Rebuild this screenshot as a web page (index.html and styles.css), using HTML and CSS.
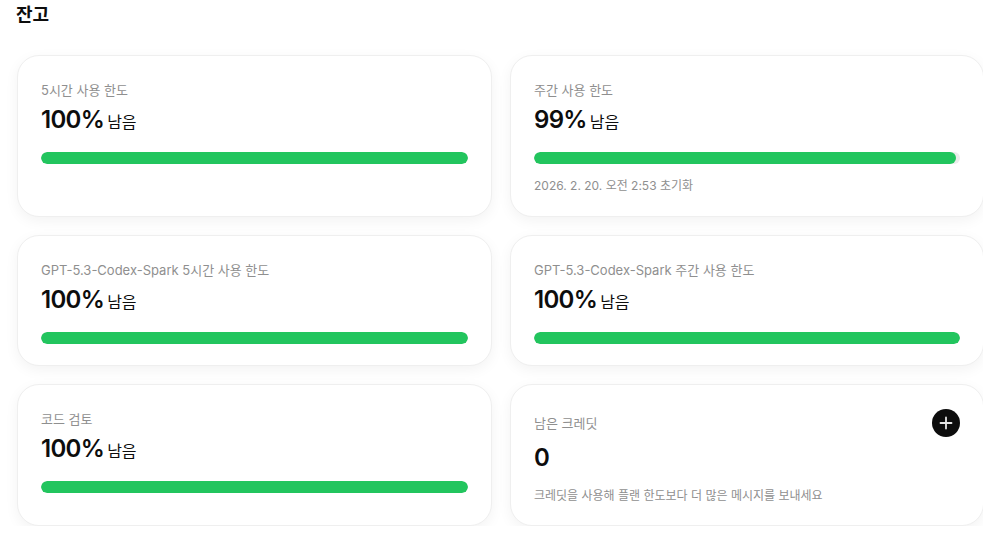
FILE: index.html
```html
<!DOCTYPE html>
<html lang="ko">
<head>
<meta charset="utf-8">
<title>잔고</title>
<link rel="stylesheet" href="styles.css">
</head>
<body>
<main class="page">
  <h2 class="title">잔고</h2>
  <div class="grid">
    <section class="card">
      <div class="label">5시간 사용 한도</div>
      <div class="value"><span class="num">100%</span><span class="unit">남음</span></div>
      <div class="track"><div class="fill" style="width:100%"></div></div>
    </section>
    <section class="card">
      <div class="label">주간 사용 한도</div>
      <div class="value"><span class="num">99%</span><span class="unit">남음</span></div>
      <div class="track"><div class="fill" style="width:99%"></div></div>
      <div class="note">2026. 2. 20. 오전 2:53 초기화</div>
    </section>
    <section class="card">
      <div class="label">GPT-5.3-Codex-Spark 5시간 사용 한도</div>
      <div class="value"><span class="num">100%</span><span class="unit">남음</span></div>
      <div class="track"><div class="fill" style="width:100%"></div></div>
    </section>
    <section class="card">
      <div class="label">GPT-5.3-Codex-Spark 주간 사용 한도</div>
      <div class="value"><span class="num">100%</span><span class="unit">남음</span></div>
      <div class="track"><div class="fill" style="width:100%"></div></div>
    </section>
    <section class="card">
      <div class="label">코드 검토</div>
      <div class="value"><span class="num">100%</span><span class="unit">남음</span></div>
      <div class="track"><div class="fill" style="width:100%"></div></div>
    </section>
    <section class="card">
      <div class="card-head">
        <div class="label">남은 크레딧</div>
        <button class="add" aria-label="크레딧 추가">
          <svg width="14" height="14" viewBox="0 0 14 14" fill="none"><path d="M7 1.5v11M1.5 7h11" stroke="#e6e6e6" stroke-width="1.8" stroke-linecap="round"/></svg>
        </button>
      </div>
      <div class="value credit"><span class="num">0</span></div>
      <div class="desc">크레딧을 사용해 플랜 한도보다 더 많은 메시지를 보내세요</div>
    </section>
  </div>
</main>
</body>
</html>
```

FILE: styles.css
```css
html, body {
  margin: 0;
  padding: 0;
  background: #ffffff;
  overflow: hidden;
}
body {
  font-family: Inter, "Noto Sans CJK KR", "Noto Sans", sans-serif;
  color: #0d0d0d;
}
.page {
  padding: 2px 0 0 17px;
}
.title {
  margin: 0 0 27px -1px;
  height: 26px;
  font-size: 18px;
  line-height: 26px;
  font-weight: 700;
  color: #0d0d0d;
}
.grid {
  display: grid;
  grid-template-columns: 475px 474px;
  column-gap: 18px;
  row-gap: 18px;
}
.card {
  box-sizing: border-box;
  background: #fff;
  border: 1px solid #efefef;
  border-radius: 22px;
  box-shadow: 0 4px 14px rgba(0, 0, 0, 0.05);
  padding: 24px 23px 21px;
  display: flex;
  flex-direction: column;
}
.label {
  height: 20px;
  font-size: 13px;
  line-height: 20px;
  color: #8f8f8f;
  white-space: nowrap;
}
.value {
  margin-top: 6px;
  height: 28px;
  line-height: 28px;
  display: flex;
  align-items: baseline;
  gap: 3px;
}
.num {
  font-size: 24px;
  font-weight: 600;
  letter-spacing: -0.7px;
  color: #0d0d0d;
  line-height: 28px;
}
.unit {
  font-size: 16px;
  color: #0d0d0d;
  line-height: 28px;
}
.track {
  margin-top: 18px;
  height: 12px;
  flex: none;
  border-radius: 6px;
  background: #ececec;
  overflow: hidden;
}
.fill {
  height: 100%;
  border-radius: 6px;
  background: #22c55e;
}
.note {
  margin-top: 13px;
  height: 18px;
  font-size: 12px;
  line-height: 18px;
  color: #8f8f8f;
}
.card-head {
  display: flex;
  align-items: center;
  justify-content: space-between;
  height: 28px;
}
.add {
  width: 28px;
  height: 28px;
  border-radius: 50%;
  border: 0;
  padding: 0;
  background: #0d0d0d;
  display: flex;
  align-items: center;
  justify-content: center;
}
.value.credit {
  margin-top: 7px;
}
.desc {
  margin-top: 16px;
  height: 16px;
  font-size: 12px;
  line-height: 16px;
  color: #8f8f8f;
}
```
